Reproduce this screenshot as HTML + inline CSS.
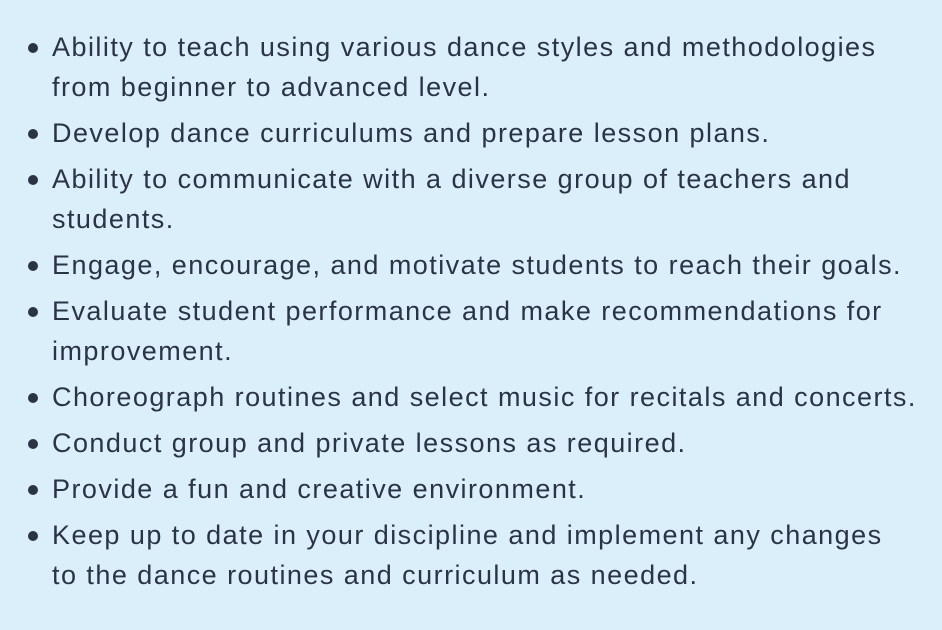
<!DOCTYPE html>
<html><head><style>
html,body{margin:0;padding:0;background:#dbeffa;width:942px;height:630px;overflow:hidden}
ul{margin:0;padding:0;list-style:none;position:absolute;left:52px;top:27px}
li{position:relative;font-family:"Liberation Sans",sans-serif;font-size:27px;letter-spacing:1.46px;line-height:40px;color:#2b3445;white-space:nowrap;margin-bottom:6px}
li:before{content:"";position:absolute;left:-24px;top:16px;width:10px;height:10px;border-radius:50%;background:#2b3445}
</style></head><body>
<ul>
<li>Ability to teach using various dance styles and methodologies<br>from beginner to advanced level.</li>
<li>Develop dance curriculums and prepare lesson plans.</li>
<li>Ability to communicate with a diverse group of teachers and<br>students.</li>
<li>Engage, encourage, and motivate students to reach their goals.</li>
<li>Evaluate student performance and make recommendations for<br>improvement.</li>
<li>Choreograph routines and select music for recitals and concerts.</li>
<li>Conduct group and private lessons as required.</li>
<li>Provide a fun and creative environment.</li>
<li>Keep up to date in your discipline and implement any changes<br>to the dance routines and curriculum as needed.</li>
</ul>
</body></html>
